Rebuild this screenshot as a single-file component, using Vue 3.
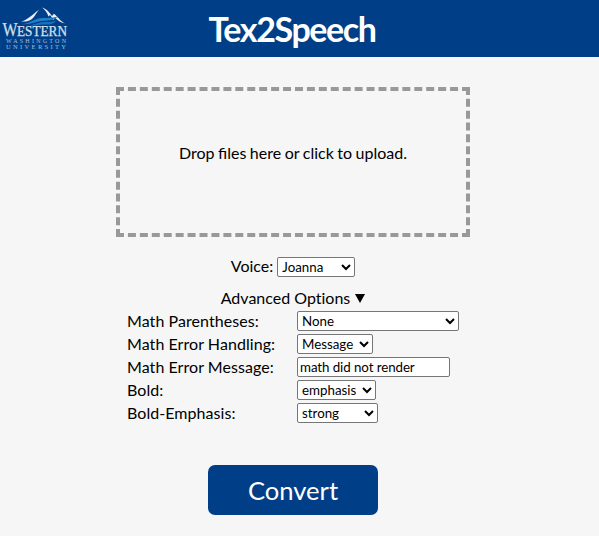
<script setup>
import { ref } from 'vue'

const voice = ref('Joanna')
const fields = ref([
  { id: 'parens', label: 'Math Parentheses:', value: 'None', type: 'select', width: 162 },
  { id: 'handling', label: 'Math Error Handling:', value: 'Message', type: 'select', width: 76 },
  { id: 'message', label: 'Math Error Message:', value: 'math did not render', type: 'text', width: 153 },
  { id: 'bold', label: 'Bold:', value: 'emphasis', type: 'select', width: 79 },
  { id: 'boldemph', label: 'Bold-Emphasis:', value: 'strong', type: 'select', width: 81 },
])
</script>

<template>
  <div class="page">
    <header class="banner">
      <svg class="brand" viewBox="0 0 72 57" width="72" height="57">
        <path d="M21 21.5 C29 20 34 12 42 8 C37 10 36 15 33 18 C30 21 26 22 21 21.5Z" fill="#e9f0f7" />
        <path d="M42 7.6 C46 8.5 49 12 52 16 L54 13.8 C58 17 60 21 65 23.5 C60 22.5 57 20 55 17.5 L53.5 20 L50 15 L48.5 16.5 C47 12.5 45 9.5 42 7.6Z" fill="#e9f0f7" />
        <path d="M22 24 C30 24 34 18 43 18 C49 18 53 18 58 16.5 C53 21 47 20.5 42 21 C35 21.5 30 25 22 24Z" fill="#1f80cc" />
        <path d="M30 25.5 C36 24 39 22 45 22 C50 22 53 22 56 20.5 C54 24 49 25 44 24.5 C39 24 36 26 30 25.5Z" fill="#1971bd" />
        <g fill="#d5e0ec" stroke="#d5e0ec" stroke-width="0.25" font-family="'Liberation Serif', serif">
          <text x="2.5" y="36" font-size="18" textLength="15" lengthAdjust="spacingAndGlyphs">W</text>
          <text x="17" y="36" font-size="14" textLength="50" lengthAdjust="spacingAndGlyphs">ESTERN</text>
        </g>
        <g fill="#a9bfd8" font-family="'Liberation Serif', serif">
          <text x="6" y="42.8" font-size="6" textLength="60">WASHINGTON</text>
          <text x="6" y="49.2" font-size="6.5" textLength="60">UNIVERSITY</text>
        </g>
      </svg>
      <h1 class="title">Tex2Speech</h1>
    </header>

    <main class="content">
      <div class="dropzone">Drop files here or click to upload.</div>

      <div class="voice">
        <label for="voice" class="voice-label">Voice:</label>
        <select id="voice" v-model="voice" class="control voice-select">
          <option>Joanna</option>
        </select>
      </div>

      <div class="toggle">
        <span>Advanced Options</span>
        <svg width="10" height="9" viewBox="0 0 10 9"><path d="M0 0H10L5 9Z" fill="#000" /></svg>
      </div>

      <div class="options">
        <div v-for="f in fields" :key="f.id" class="row">
          <label :for="f.id">{{ f.label }}</label>
          <select v-if="f.type === 'select'" :id="f.id" v-model="f.value" class="control" :style="{ width: f.width + 'px' }">
            <option>{{ f.value }}</option>
          </select>
          <input v-else :id="f.id" v-model="f.value" type="text" class="control" :style="{ width: f.width + 'px' }" />
        </div>
      </div>

      <button class="convert" type="button">Convert</button>
    </main>
  </div>
</template>

<style>
body {
  background: #f6f6f6;
}
</style>

<style scoped>
.page {
  min-height: 536px;
  background: #f6f6f6;
  color: #000;
  font: 16px/20px Lato, sans-serif;
}
.banner {
  display: grid;
  grid-template-columns: 80px 424px 80px;
  height: 57px;
  background: #003f87;
}
.brand {
  display: block;
}
.title {
  margin: 0;
  color: #fff;
  font-size: 34px;
  font-weight: 700;
  line-height: 57px;
  letter-spacing: -1.4px;
  text-align: center;
}
.content {
  display: flex;
  flex-direction: column;
  align-items: center;
  width: 586px;
  padding-top: 30px;
}
.dropzone {
  box-sizing: border-box;
  width: 354px;
  height: 150px;
  border: 4px dashed #999;
  padding-top: 52px;
  text-align: center;
  word-spacing: -0.6px;
}
.voice {
  display: flex;
  align-items: center;
  gap: 4px;
  margin-top: 20px;
}
.voice-label {
  padding-bottom: 2px;
  line-height: 18px;
}
.control {
  box-sizing: border-box;
  height: 20px;
  margin: 0;
  border: 1px solid #767676;
  border-radius: 2px;
  background-color: #fff;
  color: #000;
  font: 13.333px Lato, sans-serif;
}
input.control {
  padding: 1px 2px;
  letter-spacing: -0.08px;
}
.voice-select {
  width: 78px;
}
.toggle {
  display: flex;
  align-items: center;
  gap: 5px;
  margin-top: 11px;
  font-variant-ligatures: none;
}
.options {
  display: grid;
  gap: 3px;
  width: 332px;
  margin-top: 3px;
  letter-spacing: 0.06px;
}
.row {
  display: grid;
  grid-template-columns: 170px 162px;
  height: 20px;
}
.convert {
  width: 170px;
  height: 50px;
  margin-top: 42px;
  border: 0;
  border-radius: 7px;
  padding: 0;
  background: #003f87;
  color: #fff;
  font: 25.6px Lato, sans-serif;
}
</style>
